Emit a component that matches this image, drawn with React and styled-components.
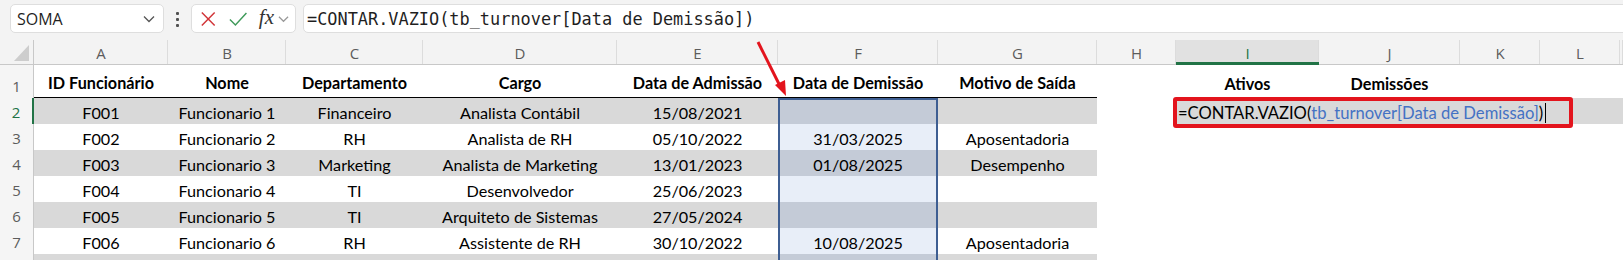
import React from 'react';
import styled, {createGlobalStyle, css} from 'styled-components';

const GlobalStyle = createGlobalStyle`
    html, body {
        margin: 0;
        padding: 0;
        background: #ffffff;
        overflow: hidden;
    }
    * {
        box-sizing: border-box;
    }
`;

const Page = styled.div`
    position: relative;
    width: 1623px;
    height: 260px;
    overflow: hidden;
    font-family: Lato, "Liberation Sans", sans-serif;
`;

const Toolbar = styled.div`
    display: flex;
    align-items: flex-start;
    height: 40px;
    padding: 4px 0 0 10px;
    background-color: #f3f3f3;
`;

const Box = styled.div`
    display: flex;
    align-items: center;
    height: 29px;
    background-color: #ffffff;
    border: 1px solid #dedede;
    border-radius: 5px;
`;

const NameBox = styled(Box)`
    width: 154px;
    padding: 0 8px 0 6px;
    justify-content: space-between;
    font-family: "Open Sans", "Noto Sans", sans-serif;
    font-size: 16px;
    color: #1f1f1f;
`;

const Dots = styled.div`
    display: flex;
    flex-direction: column;
    gap: 3px;
    width: 27px;
    align-items: center;
    padding-top: 8px;

    span {
        width: 3px;
        height: 3px;
        border-radius: 1px;
        background-color: #505050;
    }
`;

const FxBox = styled(Box)`
    width: 105px;
    padding: 0 6px 0 8px;
    gap: 12px;
`;

const FormulaBox = styled(Box)`
    flex: 1;
    margin-left: 7px;
    margin-right: -12px;
    padding-left: 3px;
    font-family: "DejaVu Sans Mono", "Liberation Mono", monospace;
    font-size: 16.9px;
    color: #1f1f1f;
    white-space: nowrap;
`;

const Fx = styled.span`
    font-family: "Liberation Serif", "DejaVu Serif", serif;
    font-style: italic;
    font-size: 21px;
    color: #333333;
    margin-top: -3px;
    margin-right: -8px;
`;

const Sheet = styled.div`
    display: grid;
    grid-template-columns: 34px 134px 118px 137px 194px 161px 160px 159px 79px 143px 141px 80px 80px 1fr;
    grid-template-rows: 25px 33px repeat(7, 26px);
`;

const Corner = styled.div`
    background-color: #f3f3f3;
    border-right: 1px solid #c8c8c8;
    border-bottom: 1px solid #c8c8c8;
    display: flex;
    align-items: flex-end;
    justify-content: flex-end;
    padding: 0 4px 3px 0;
`;

const ColHead = styled.div`
    display: flex;
    align-items: center;
    justify-content: center;
    background-color: ${p => (p.active ? '#e1e1e1' : '#f3f3f3')};
    border-bottom: ${p => (p.active ? '3px solid #217346' : '1px solid #c8c8c8')};
    box-shadow: inset -1px 0 0 #dcdcdc;
    font-family: "Open Sans", "Noto Sans", sans-serif;
    font-size: 15px;
    color: ${p => (p.active ? '#217346' : '#5c5c5c')};
    padding-top: ${p => (p.active ? '3px' : '1px')};
`;

const RowHead = styled.div`
    display: flex;
    align-items: flex-end;
    justify-content: center;
    padding-bottom: 2px;
    background-color: #f5f5f5;
    border-right: ${p => (p.active ? '2px solid #217346' : '1px solid #c8c8c8')};
    font-family: "Open Sans", "Noto Sans", sans-serif;
    font-size: 15px;
    color: ${p => (p.active ? '#217346' : '#5c5c5c')};
`;

const selection = css`
    box-shadow: inset 2px 0 0 #3e5e92, inset -2px 0 0 #3e5e92 ${p => (p.first ? ', inset 0 2px 0 #3e5e92' : '')};
`;

const Cell = styled.div`
    position: relative;
    display: flex;
    align-items: center;
    justify-content: center;
    padding-top: ${p => (p.head ? '3px' : '2px')};
    white-space: nowrap;
    font-size: 16.2px;
    font-weight: ${p => (p.head ? 700 : 400)};
    color: #000000;
    background-color: ${p => {
        if (p.selected) return p.band ? '#c4cbd7' : '#e8eef8';
        return p.band ? '#d9d9d9' : '#ffffff';
    }};
    border-bottom: ${p => (p.rule ? '1px solid #000000' : 'none')};
    ${p => p.selected && selection}
`;

const Callout = styled.div`
    position: absolute;
    left: -3px;
    top: -1px;
    width: 400px;
    height: 31px;
    display: flex;
    align-items: center;
    padding: 1px 0 0 1px;
    border: 4px solid #e3141d;
    border-radius: 3px;
    font-size: 16.6px;
    color: #000000;
    white-space: nowrap;
    z-index: 2;
`;

const Ref = styled.span`
    color: #4472c4;
`;

const Caret = styled.span`
    display: inline-block;
    width: 1px;
    height: 20px;
    margin-left: 2px;
    background-color: #000000;
`;

const Arrow = styled.svg`
    position: absolute;
    left: 750px;
    top: 38px;
    z-index: 3;
`;

const Chevron = ({color = '#555'}) => (
    <svg width="12" height="8" viewBox="0 0 12 8">
        <path d="M1 1.5 L6 6.5 L11 1.5" fill="none" stroke={color} strokeWidth="1.3" />
    </svg>
);

const columns = ['A', 'B', 'C', 'D', 'E', 'F', 'G', 'H', 'I', 'J', 'K', 'L', 'M'];

const headers = ['ID Funcionário', 'Nome', 'Departamento', 'Cargo', 'Data de Admissão', 'Data de Demissão', 'Motivo de Saída'];

const rows = [
    ['F001', 'Funcionario 1', 'Financeiro', 'Analista Contábil', '15/08/2021', '', ''],
    ['F002', 'Funcionario 2', 'RH', 'Analista de RH', '05/10/2022', '31/03/2025', 'Aposentadoria'],
    ['F003', 'Funcionario 3', 'Marketing', 'Analista de Marketing', '13/01/2023', '01/08/2025', 'Desempenho'],
    ['F004', 'Funcionario 4', 'TI', 'Desenvolvedor', '25/06/2023', '', ''],
    ['F005', 'Funcionario 5', 'TI', 'Arquiteto de Sistemas', '27/05/2024', '', ''],
    ['F006', 'Funcionario 6', 'RH', 'Assistente de RH', '30/10/2022', '10/08/2025', 'Aposentadoria'],
    ['', '', '', '', '', '', ''],
];

function App() {
    return (
        <Page>
            <GlobalStyle />
            <Toolbar>
                <NameBox>
                    <span>SOMA</span>
                    <Chevron />
                </NameBox>
                <Dots><span /><span /><span /></Dots>
                <FxBox>
                    <svg width="18" height="18" viewBox="0 0 18 18">
                        <path d="M2 2 L16 16 M16 2 L2 16" stroke="#d13438" strokeWidth="1.6" fill="none" />
                    </svg>
                    <svg width="20" height="16" viewBox="0 0 20 16">
                        <path d="M1 8.5 L7 14.5 L19 1.5" stroke="#3f9a5a" strokeWidth="1.6" fill="none" />
                    </svg>
                    <Fx>fx</Fx>
                    <Chevron color="#999" />
                </FxBox>
                <FormulaBox>=CONTAR.VAZIO(tb_turnover[Data de Demissão])</FormulaBox>
            </Toolbar>

            <Sheet>
                <Corner>
                    <svg width="15" height="16" viewBox="0 0 15 16">
                        <path d="M15 0 L15 16 L0 16 Z" fill="#cdcdcd" />
                    </svg>
                </Corner>
                {columns.map(c => (
                    <ColHead key={c} active={c === 'I'}>{c === 'M' ? '' : c}</ColHead>
                ))}

                <RowHead>1</RowHead>
                {headers.map(h => (
                    <Cell key={h} head rule>{h}</Cell>
                ))}
                <Cell />
                <Cell head>Ativos</Cell>
                <Cell head>Demissões</Cell>
                <Cell />
                <Cell />
                <Cell />

                {rows.map((r, ri) => {
                    const band = ri % 2 === 0;
                    const extras = ri === 0;
                    const last = ri === rows.length - 1;
                    return (
                        <React.Fragment key={ri}>
                            <RowHead active={ri === 0}>{last ? '' : ri + 2}</RowHead>
                            {r.map((v, ci) => (
                                <Cell key={ci} band={band} selected={ci === 5} first={ci === 5 && ri === 0}>
                                    {v}
                                </Cell>
                            ))}
                            <Cell />
                            <Cell band={extras}>
                                {extras && (
                                    <Callout>
                                        =CONTAR.VAZIO(<Ref>tb_turnover[Data de Demissão]</Ref>)<Caret />
                                    </Callout>
                                )}
                            </Cell>
                            <Cell band={extras} />
                            <Cell band={extras} />
                            <Cell band={extras} />
                            <Cell band={extras} />
                        </React.Fragment>
                    );
                })}
            </Sheet>

            <Arrow width="44" height="62" viewBox="0 0 44 62">
                <path d="M8 4 L31 50" stroke="#e3141d" strokeWidth="3" fill="none" />
                <path d="M36 58 L25 47 L35 42 Z" fill="#e3141d" />
            </Arrow>
        </Page>
    );
}

export default App;
